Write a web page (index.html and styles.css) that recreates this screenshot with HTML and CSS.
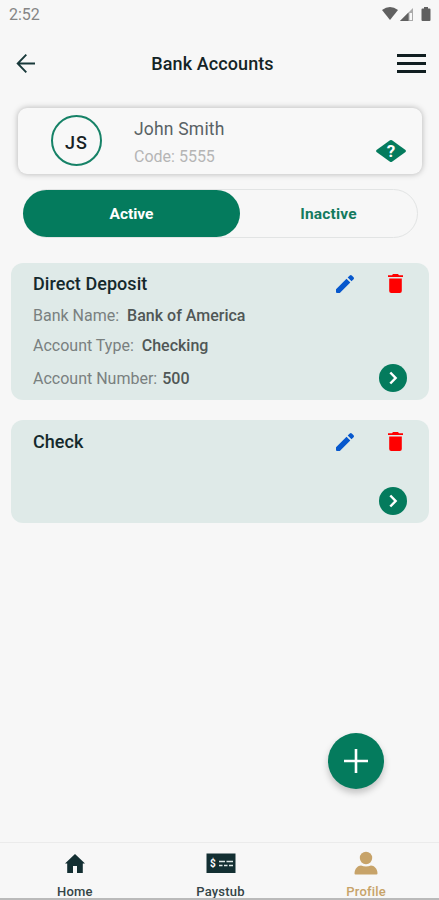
FILE: index.html
```html
<!DOCTYPE html>
<html lang="en">
<head>
<meta charset="utf-8">
<title>Bank Accounts</title>
<link rel="stylesheet" href="styles.css">
</head>
<body>
<svg class="defs" aria-hidden="true">
  <symbol id="pencil" viewBox="0 0 20 20"><path d="M1 15.200L11.500 4.700l3.800 3.800L4.800 19H2q-1 0-1-1zM12.700 3.500L14.800 1.400q1-.9 2 0l1.800 1.800q.9 1 0 2L16.500 7.300z"/></symbol>
  <symbol id="trash" viewBox="0 0 15 19"><path d="M1.200 4.500h12.600V17q0 2-2 2H3.200q-2 0-2-2zM0 1.200h4l1-1.200h5l1 1.200h4v1.900H0z"/></symbol>
  <symbol id="chevron" viewBox="0 0 28 28"><circle cx="14" cy="14" r="14"/><path d="M11.300 8.500l5.300 5.500-5.300 5.500" fill="none" stroke="#fff" stroke-width="2.500"/></symbol>
</svg>
<div class="screen">
  <div class="status">
    <span class="time">2:52</span>
    <svg class="signals" width="50" height="16" viewBox="0 0 50 16">
      <path d="M0 4Q8 -2 16 4L8 14z"/>
      <path d="M18 15L31 2V15z" fill="#aaa"/><path d="M18 15L26.500 6.500V15z"/><path d="M27.500 7h2.500v7h-2.500z" fill="#f7f7f7"/>
      <path d="M42 1h4v1.500h1.500q1 0 1 1V14q0 1-1 1h-7q-1 0-1-1V3.500q0-1 1-1H42z"/>
    </svg>
  </div>
  <header class="header">
    <svg width="20" height="20" viewBox="0 0 20 20"><path d="M19 9.500H2M10.300 .7L1.700 9.500l8.600 8.800" fill="none" stroke="#18393a" stroke-width="1.900"/></svg>
    <h1>Bank Accounts</h1>
    <div class="menu"><i></i><i></i><i></i></div>
  </header>
  <section class="person">
    <div class="avatar">JS</div>
    <div class="who"><div class="name">John Smith</div><div class="code">Code: 5555</div></div>
    <div class="help"><svg width="32" height="24" viewBox="0 0 32 24"><path d="M15 1.300q1-.6 2 0L30.500 11q1 1 0 2L17 22.700q-1 .6-2 0L1.500 13q-1-1 0-2z" fill="#047b5d"/></svg><span>?</span></div>
  </section>
  <div class="tabs"><div class="tab active">Active</div><div class="tab">Inactive</div></div>
  <section class="account deposit">
    <div class="top"><h2>Direct Deposit</h2><svg class="edit"><use href="#pencil"/></svg><svg class="delete"><use href="#trash"/></svg></div>
    <dl>
      <div class="bank"><dt>Bank Name:</dt><dd>Bank of America</dd></div>
      <div class="type"><dt>Account Type:</dt><dd>Checking</dd></div>
      <div class="number"><dt>Account Number:</dt><dd>500</dd></div>
    </dl>
    <svg class="go"><use href="#chevron"/></svg>
  </section>
  <section class="account check">
    <div class="top"><h2>Check</h2><svg class="edit"><use href="#pencil"/></svg><svg class="delete"><use href="#trash"/></svg></div>
    <svg class="go"><use href="#chevron"/></svg>
  </section>
  <div class="fab"><svg width="56" height="56" viewBox="0 0 56 56"><path d="M28 16v24M16 28h24" stroke="#fff" stroke-width="2.600"/></svg></div>
  <nav class="nav">
    <div class="item home"><svg width="30" height="26" viewBox="0 0 30 26"><path d="M15 4l10 9.500h-2.200V23H17v-7h-4v7H7.200v-9.500H5z"/></svg><span>Home</span></div>
    <div class="item pay"><svg width="30" height="26" viewBox="0 0 30 26"><path d="M.5 3.500h29V23H.5z"/><path d="M13 11.500h6M20.500 11.500H27M13 15.500h3.500M18 15.500h3.500M23 15.500h4" stroke="#dfe9e8" stroke-width="1.600"/><text x="4" y="17" class="dollar">$</text></svg><span>Paystub</span></div>
    <div class="item profile"><svg width="30" height="26" viewBox="0 0 30 26"><circle cx="15" cy="8" r="6.200"/><path d="M3.500 23.500C3.500 18.500 7 15.500 10 15.500q5 2 10 0c3 0 6.500 3 6.500 8q0 1-1 1h-21q-1 0-1-1z"/></svg><span>Profile</span></div>
  </nav>
</div>
</body>
</html>
```

FILE: styles.css
```css
* { box-sizing: border-box; }
body { margin: 0; background: #f7f7f7; font-family: Roboto, sans-serif; }
h1, h2, dl, dd { margin: 0; }
.defs { position: absolute; width: 0; height: 0; }
.screen { width: 439px; height: 900px; display: flex; flex-direction: column; overflow: hidden; position: relative; }
.status { height: 30px; display: flex; justify-content: space-between; padding: 6px 7px 0 9px; flex: none; }
.time { font-size: 16px; line-height: 18px; color: #858585; }
.signals { fill: #606060; }
.header { height: 68px; flex: none; display: flex; align-items: center; justify-content: space-between; padding: 0 13px 0 16px; }
.header h1 { font-size: 18px; font-weight: 500; line-height: 20px; letter-spacing: .1px; color: #142426; margin-left: -8px; }
.menu { width: 29px; display: flex; flex-direction: column; gap: 5px; margin-top: -2px; }
.menu i { height: 3px; background: #101e20; }
.person { margin: 10px 17px 0 18px; height: 66px; flex: none; display: flex; background: #f8f8f8; border-radius: 9px; box-shadow: 0 0 6px rgba(0,0,0,.28); }
.avatar { width: 51px; height: 51px; margin: 7px 0 0 33px; border: 2px solid #168267; border-radius: 50%; text-align: center; font-size: 18px; line-height: 51px; font-weight: 500; letter-spacing: 1px; color: #172224; }
.who { margin: 11px 0 0 32px; }
.name { font-size: 17.5px; line-height: 20px; letter-spacing: .2px; color: #596265; }
.code { font-size: 16px; line-height: 20px; margin-top: 8px; letter-spacing: 0; color: #b5b5b5; }
.help { margin: 31px 15px 0 auto; width: 32px; height: 24px; display: grid; }
.help > * { grid-area: 1 / 1; }
.help span { color: #fff; text-align: center; font-weight: 700; font-size: 17px; line-height: 24px; }
.tabs { margin: 15px 21px 0 23px; height: 49px; flex: none; display: flex; border: 1px solid #e2e4e4; border-radius: 25px; }
.tab { flex: 1; text-align: center; font-size: 15.5px; font-weight: 700; line-height: 49px; color: #147a5e; letter-spacing: .2px; }
.tab.active { flex: none; width: 217px; height: 47px; margin-left: -1px; background: #047b5d; color: #fff; border-radius: 24px; letter-spacing: 0; }
.account { margin: 25px 10px 0 11px; background: #dfeae8; border-radius: 12px; flex: none; position: relative; display: flex; flex-direction: column; padding: 10px 22px 8px 22px; }
.deposit { height: 137px; }
.check { height: 103px; margin-top: 20px; padding-top: 11px; }
.top { display: flex; align-items: flex-start; padding-right: 4px; }
.account h2 { flex: 1; font-size: 18px; line-height: 22px; font-weight: 500; letter-spacing: .05px; color: #14292c; }
.edit { width: 20px; height: 20px; fill: #0758cd; margin: 1px 33px 0 0; }
.delete { width: 15px; height: 19px; fill: #f00; margin: 1px 0 0; }
dl > div { display: flex; font-size: 16px; line-height: 20px; }
dt { color: #79807f; }
dd { color: #505756; font-weight: 500; }
.bank { margin-top: 11px; } .bank dd { margin-left: 8px; }
.type { margin-top: 10px; } .type dd { margin-left: 8px; }
.number { margin-top: 13px; } .number dd { margin-left: 5px; }
.go { width: 28px; height: 28px; fill: #047b5d; position: absolute; right: 22px; bottom: 8px; }
.fab { position: absolute; right: 55px; bottom: 111px; width: 56px; height: 56px; border-radius: 50%; background: #047b5d; box-shadow: 0 4px 7px rgba(0,0,0,.22); }
.nav { margin-top: auto; height: 58px; flex: none; display: flex; border-top: 1px solid #ebebeb; border-bottom: 2px solid #bababa; overflow: hidden; padding-left: 2px; }
.item { flex: 1; display: flex; flex-direction: column; align-items: center; padding-top: 7px; fill: #132f32; color: #344446; font-size: 13px; font-weight: 500; line-height: 16px; letter-spacing: .2px; }
.item svg { flex: none; }
.item span { margin-top: 8px; }
.profile { fill: #c7a369; color: #c7a369; }
.dollar { font: 700 10px Roboto, sans-serif; fill: #fff; }
```
